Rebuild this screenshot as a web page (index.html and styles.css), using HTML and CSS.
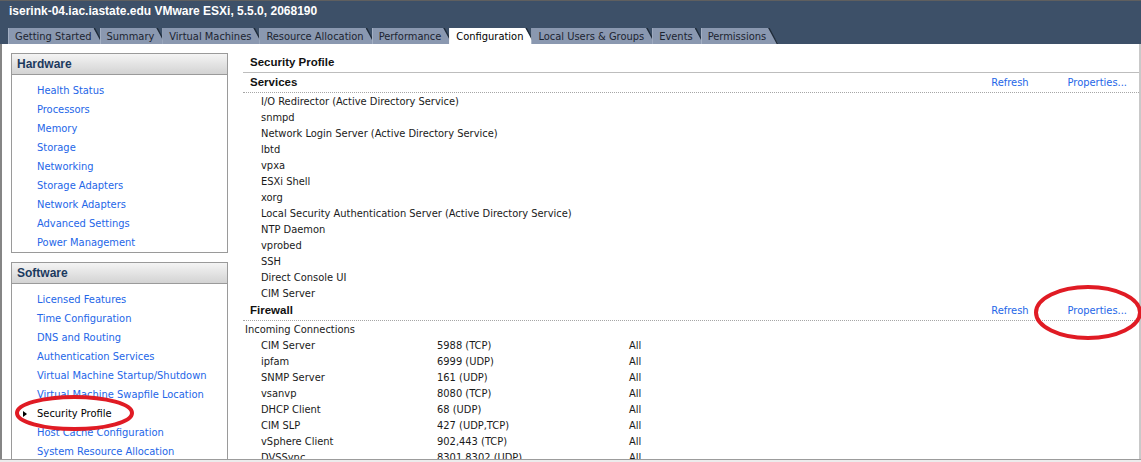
FILE: index.html
```html
<!DOCTYPE html>
<html>
<head>
<meta charset="utf-8">
<title>VMware ESXi - Security Profile</title>
<link rel="stylesheet" href="styles.css">
</head>
<body>
<div class="app">
  <header class="header">
    <div class="title">iserink-04.iac.iastate.edu VMware ESXi, 5.5.0, 2068190</div>
    <nav class="tabs">
      <span class="tab">Getting Started</span>
      <span class="tab">Summary</span>
      <span class="tab">Virtual Machines</span>
      <span class="tab">Resource Allocation</span>
      <span class="tab">Performance</span>
      <span class="tab active">Configuration</span>
      <span class="tab">Local Users &amp; Groups</span>
      <span class="tab">Events</span>
      <span class="tab">Permissions</span>
    </nav>
  </header>
  <main class="main">
    <aside class="sidebar">
      <section class="box">
        <div class="box-head">Hardware</div>
        <ul class="box-list">
          <li>Health Status</li>
          <li>Processors</li>
          <li>Memory</li>
          <li>Storage</li>
          <li>Networking</li>
          <li>Storage Adapters</li>
          <li>Network Adapters</li>
          <li>Advanced Settings</li>
          <li>Power Management</li>
        </ul>
      </section>
      <section class="box box-sw">
        <div class="box-head">Software</div>
        <ul class="box-list">
          <li>Licensed Features</li>
          <li>Time Configuration</li>
          <li>DNS and Routing</li>
          <li>Authentication Services</li>
          <li>Virtual Machine Startup/Shutdown</li>
          <li>Virtual Machine Swapfile Location</li>
          <li class="selected"><span class="arrow"></span>Security Profile</li>
          <li>Host Cache Configuration</li>
          <li>System Resource Allocation</li>
          <li>Agent VM Settings</li>
        </ul>
      </section>
    </aside>
    <div class="content">
      <div class="page-title">Security Profile</div>
      <div class="sec-head">
        <span class="sec-name">Services</span>
        <span class="actions"><span class="link">Refresh</span><span class="link">Properties...</span></span>
      </div>
      <ul class="svc-list">
        <li>I/O Redirector (Active Directory Service)</li>
        <li>snmpd</li>
        <li>Network Login Server (Active Directory Service)</li>
        <li>lbtd</li>
        <li>vpxa</li>
        <li>ESXi Shell</li>
        <li>xorg</li>
        <li>Local Security Authentication Server (Active Directory Service)</li>
        <li>NTP Daemon</li>
        <li>vprobed</li>
        <li>SSH</li>
        <li>Direct Console UI</li>
        <li>CIM Server</li>
      </ul>
      <div class="sec-head">
        <span class="sec-name">Firewall</span>
        <span class="actions"><span class="link">Refresh</span><span class="link">Properties...</span></span>
      </div>
      <div class="sub-head">Incoming Connections</div>
      <div class="fw-table">
        <div class="fw-row"><span>CIM Server</span><span>5988 (TCP)</span><span>All</span></div>
        <div class="fw-row"><span>ipfam</span><span>6999 (UDP)</span><span>All</span></div>
        <div class="fw-row"><span>SNMP Server</span><span>161 (UDP)</span><span>All</span></div>
        <div class="fw-row"><span>vsanvp</span><span>8080 (TCP)</span><span>All</span></div>
        <div class="fw-row"><span>DHCP Client</span><span>68 (UDP)</span><span>All</span></div>
        <div class="fw-row"><span>CIM SLP</span><span>427 (UDP,TCP)</span><span>All</span></div>
        <div class="fw-row"><span>vSphere Client</span><span>902,443 (TCP)</span><span>All</span></div>
        <div class="fw-row"><span>DVSSync</span><span>8301,8302 (UDP)</span><span>All</span></div>
      </div>
    </div>
  </main>
  <div class="footer"></div>
</div>
<svg class="marks" width="1141" height="462" viewBox="0 0 1141 462">
  <ellipse cx="74.5" cy="413" rx="57.5" ry="16" fill="none" stroke="#e01b24" stroke-width="4"/>
  <ellipse cx="1088" cy="312.5" rx="52" ry="25.5" fill="none" stroke="#e01b24" stroke-width="4"/>
</svg>
</body>
</html>
```

FILE: styles.css
```css
* { box-sizing: border-box; }

html, body {
  margin: 0;
  padding: 0;
}

body {
  width: 1141px;
  height: 462px;
  overflow: hidden;
  position: relative;
  background: #ffffff;
  font-family: "DejaVu Sans Condensed", "DejaVu Sans", sans-serif;
  font-size: 11px;
  color: #1a1a1a;
}

.app {
  width: 1141px;
  height: 462px;
  display: flex;
  flex-direction: column;
}

/* ---------- header ---------- */
.header {
  flex: none;
  height: 44px;
  background: #3d5068;
  border-top: 1px solid #5f5f5f;
}

.title {
  height: 20px;
  line-height: 20px;
  padding-left: 9px;
  font-family: "Liberation Sans", Arial, sans-serif;
  font-weight: bold;
  font-size: 12px;
  color: #ffffff;
}

.tabs {
  display: flex;
  margin-top: 7px;
  padding-left: 8px;
  height: 16px;
}

.tab {
  position: relative;
  z-index: 0;
  height: 16px;
  padding: 2px 12px 0 7px;
  line-height: 14px;
  margin-right: -4px;
  color: #1c2430;
  white-space: nowrap;
}

.tab::before {
  content: "";
  position: absolute;
  inset: 0;
  z-index: -1;
  background: #8a98b0;
  border-left: 1px solid #a3afc3;
  clip-path: polygon(0 0, calc(100% - 10px) 0, 100% 100%, 0 100%);
}

.tab::after {
  content: "";
  position: absolute;
  top: 0;
  right: 0;
  width: 10px;
  height: 100%;
  background: #1f2b39;
  clip-path: polygon(0 0, 1.5px 0, 100% 100%, calc(100% - 1.5px) 100%);
}

.tab.active {
  color: #000000;
}

.tab.active::before {
  background: #ffffff;
  border-left-color: #ffffff;
}

/* ---------- main ---------- */
.main {
  flex: none;
  height: 415px;
  display: flex;
  overflow: hidden;
  border-left: 2px solid #858585;
  border-right: 2px solid #c9c9c9;
}

.sidebar {
  flex: none;
  width: 217px;
  margin-left: 9px;
  padding-top: 9px;
}

.box {
  border: 1px solid #9a9a9a;
  background: #ffffff;
}

.box-sw {
  margin-top: 9px;
  padding-bottom: 40px;
}

.box-head {
  height: 21px;
  line-height: 20px;
  padding-left: 5px;
  font-family: "Liberation Sans", Arial, sans-serif;
  font-weight: bold;
  font-size: 12px;
  color: #1c3a5e;
  background: linear-gradient(#f4f4f4, #d3d3d3);
  border-bottom: 1px solid #9a9a9a;
}

.box-list {
  list-style: none;
  margin: 0;
  padding: 5px 0 1px 25px;
}

.box-list li {
  height: 19px;
  padding-top: 2px;
  line-height: 17px;
  color: #2466e8;
  white-space: nowrap;
}

.box-list li.selected {
  color: #000000;
}

.arrow {
  display: inline-block;
  width: 0;
  height: 0;
  margin-left: -14px;
  margin-right: 10px;
  vertical-align: 0;
  border-left: 4px solid #000000;
  border-top: 3px solid transparent;
  border-bottom: 3px solid transparent;
}

/* ---------- content ---------- */
.content {
  flex: 1;
  margin-left: 15px;
  padding-top: 9px;
  min-width: 0;
}

.page-title {
  height: 20px;
  line-height: 19px;
  padding-left: 7px;
  font-family: "Liberation Sans", Arial, sans-serif;
  font-weight: bold;
  font-size: 11.5px;
  color: #111111;
  border-bottom: 1px solid #bdbdbd;
}

.sec-head {
  display: flex;
  justify-content: space-between;
  height: 20px;
  line-height: 19px;
  padding: 0 12px 0 7px;
  border-bottom: 1px dotted #a6a6a6;
}

.sec-name {
  font-family: "Liberation Sans", Arial, sans-serif;
  font-weight: bold;
  font-size: 11.5px;
  color: #111111;
}

.actions {
  display: flex;
  gap: 39px;
}

.link {
  color: #2466e8;
}

.svc-list {
  list-style: none;
  margin: 0;
  padding: 0 0 0 18px;
}

.svc-list li {
  height: 16px;
  padding-top: 2px;
  line-height: 14px;
  white-space: nowrap;
}

.sub-head {
  height: 16px;
  padding-top: 2px;
  line-height: 14px;
  padding-left: 2px;
}

.fw-row {
  display: grid;
  grid-template-columns: 176px 192px 1fr;
  height: 16px;
  padding-top: 2px;
  line-height: 14px;
  padding-left: 18px;
  white-space: nowrap;
}

/* ---------- footer ---------- */
.footer {
  flex: none;
  height: 3px;
  border-top: 1px solid #9c9c9c;
  background: #ececec;
}

/* ---------- annotation overlay ---------- */
.marks {
  position: absolute;
  left: 0;
  top: 0;
  pointer-events: none;
}
```
